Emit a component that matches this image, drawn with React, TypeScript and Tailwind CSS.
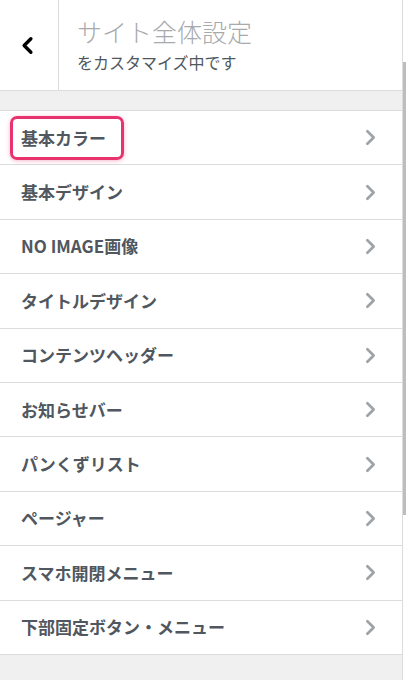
import { ChevronLeft, ChevronRight } from 'lucide-react';

const sections = [
  '基本カラー',
  '基本デザイン',
  'NO IMAGE画像',
  'タイトルデザイン',
  'コンテンツヘッダー',
  'お知らせバー',
  'パンくずリスト',
  'ページャー',
  'スマホ開閉メニュー',
  '下部固定ボタン・メニュー',
];

export default function App() {
  return (
    <div
      className="flex w-[406px] h-[680px] overflow-hidden bg-[#f0f0f1]"
      style={{ fontFamily: '"Noto Sans CJK JP", "Noto Sans", sans-serif' }}
    >
      <div className="flex flex-col flex-1 border-r border-[#dcdcde]">
        {/* Panel header */}
        <div className="flex h-[91px] shrink-0 bg-white border-b border-[#dcdcde]">
          <button className="flex items-center justify-center w-[59px] pr-[3px] border-r border-[#dcdcde] text-black">
            <ChevronLeft size={27} strokeWidth={3} />
          </button>
          <div className="flex flex-col pl-[18px] pt-[15px]">
            <span className="text-[25px] leading-[32px] font-light text-[#a7aaad]">サイト全体設定</span>
            <span className="text-[16px] leading-[22px] mt-[4px] text-[#50575e]">をカスタマイズ中です</span>
          </div>
        </div>

        <div className="h-[19px] shrink-0" />

        {/* Section list */}
        <ul className="bg-white border-t border-[#dcdcde]">
          {sections.map((label, i) => (
            <li
              key={label}
              className="flex items-center justify-between h-[54.4px] pl-[21px] pr-[19px] border-b border-[#dcdcde]"
            >
              {i === 0 ? (
                <span className="-ml-[11px] pl-[8px] pr-[15px] py-[7px] border-[3px] border-[#e8336e] rounded-[7px] shadow-[0_1px_4px_rgba(232,51,110,0.35)] text-[17px] leading-[24px] font-bold text-[#50575e]">
                  {label}
                </span>
              ) : (
                <span className="text-[17px] leading-[24px] font-bold text-[#50575e]">{label}</span>
              )}
              <ChevronRight size={25} strokeWidth={2.6} className="text-[#9ea3a8]" />
            </li>
          ))}
        </ul>
      </div>

      {/* Scrollbar */}
      <div className="w-[3px] shrink-0 bg-white">
        <div className="mt-[62px] h-[453px] bg-[#bdbdbd]" />
      </div>
    </div>
  );
}
